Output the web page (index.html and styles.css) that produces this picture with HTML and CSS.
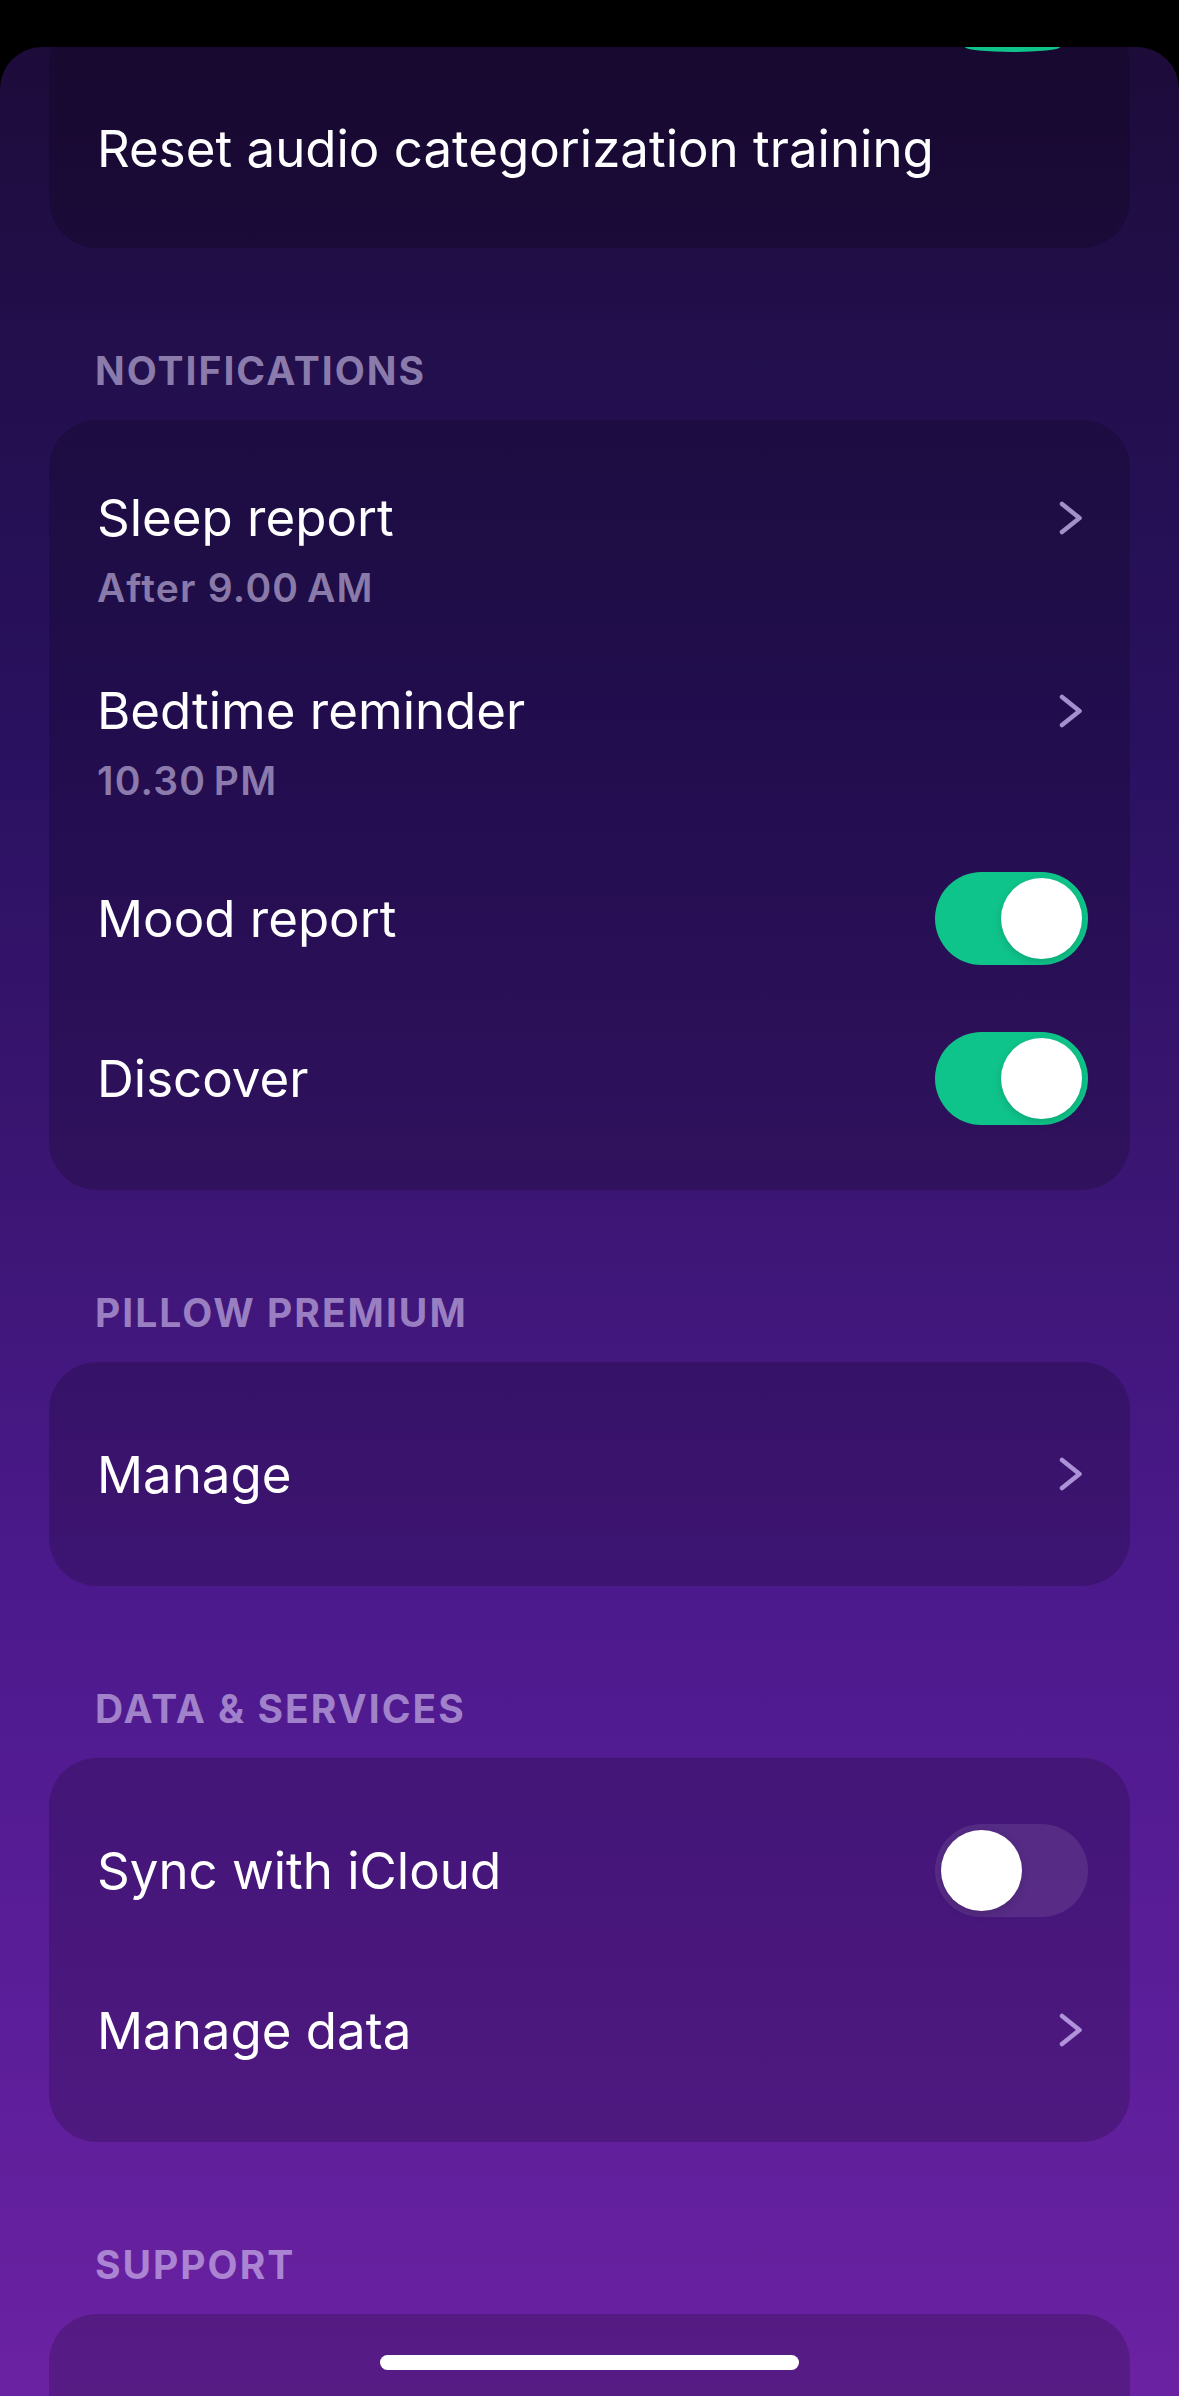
FILE: index.html
```html
<!DOCTYPE html>
<html lang="en">
<head>
    <meta charset="UTF-8">
    <meta name="viewport" content="width=device-width, initial-scale=1.0">
    <title>Settings</title>
    <link rel="stylesheet" href="styles.css">
</head>
<body>

    <div class="sheet">
        <div class="card card-top">
            <div class="peek"></div>
            <div class="row-title">Reset audio categorization training</div>
        </div>

        <h2 class="section-title">Notifications</h2>
        <div class="card">
            <div class="row row-double">
                <div class="row-line">
                    <span class="row-title">Sleep report</span>
                    <svg class="chevron" viewBox="0 0 24 34"><path d="M3 3 L20.5 17 L3 31"/></svg>
                </div>
                <div class="row-sub">After 9.00&#8239;AM</div>
            </div>
            <div class="row row-double">
                <div class="row-line">
                    <span class="row-title">Bedtime reminder</span>
                    <svg class="chevron" viewBox="0 0 24 34"><path d="M3 3 L20.5 17 L3 31"/></svg>
                </div>
                <div class="row-sub">10.30&#8239;PM</div>
            </div>
            <div class="row">
                <span class="row-title">Mood report</span>
                <span class="toggle"><span class="knob"></span></span>
            </div>
            <div class="row">
                <span class="row-title">Discover</span>
                <span class="toggle"><span class="knob"></span></span>
            </div>
        </div>

        <h2 class="section-title">Pillow Premium</h2>
        <div class="card">
            <div class="row">
                <span class="row-title">Manage</span>
                <svg class="chevron" viewBox="0 0 24 34"><path d="M3 3 L20.5 17 L3 31"/></svg>
            </div>
        </div>

        <h2 class="section-title">Data &amp; Services</h2>
        <div class="card">
            <div class="row">
                <span class="row-title">Sync with iCloud</span>
                <span class="toggle off"><span class="knob"></span></span>
            </div>
            <div class="row">
                <span class="row-title">Manage data</span>
                <svg class="chevron" viewBox="0 0 24 34"><path d="M3 3 L20.5 17 L3 31"/></svg>
            </div>
        </div>

        <h2 class="section-title">Support</h2>
        <div class="card card-cut"></div>
    </div>

    <div class="home-indicator"></div>

</body>
</html>
```

FILE: styles.css
```css
* {
    margin: 0;
    padding: 0;
    box-sizing: border-box;
}
body {
    font-family: 'Inter', 'Noto Sans', sans-serif;
    background-color: #000000;
    color: #fff;
    height: 2396px;
    overflow: hidden;
    position: relative;
}
.sheet {
    display: flex;
    flex-direction: column;
    margin-top: 47px;
    min-height: 2349px;
    padding: 0 49px;
    border-radius: 42px 42px 0 0;
    background: linear-gradient(180deg,
        #1d0b3a 0px,
        #220f4c 300px,
        #2a1160 700px,
        #3a1571 1100px,
        #4a198a 1500px,
        #591d98 1900px,
        #6b22a2 2349px);
}
.card {
    background-color: rgba(0, 0, 0, 0.18);
    border-radius: 48px;
    padding: 32px 42px 32px 48px;
}
.card-top {
    margin-top: -30px;
    padding-top: 30px;
    padding-bottom: 69px;
}
.peek {
    width: 95px;
    height: 5px;
    margin: 0 28px 66px auto;
    background-color: #0fc48a;
    border-radius: 0 0 48px 48px / 0 0 5px 5px;
}
.card-cut {
    min-height: 200px;
}
.section-title {
    font-size: 39px;
    font-weight: 700;
    line-height: 45px;
    letter-spacing: 2px;
    text-transform: uppercase;
    color: rgba(232, 220, 255, 0.54);
    margin: 100px 0 27px 46px;
}
.row {
    display: flex;
    align-items: center;
    justify-content: space-between;
    height: 160px;
}
.row-double {
    height: 193px;
    flex-direction: column;
    align-items: stretch;
    justify-content: center;
}
.row-line {
    display: flex;
    align-items: center;
    justify-content: space-between;
}
.row-title {
    font-size: 51px;
    line-height: 61px;
}
.row-sub {
    font-size: 39px;
    font-weight: 600;
    line-height: 45px;
    letter-spacing: 1.2px;
    margin-top: 17px;
    color: rgba(232, 220, 255, 0.54);
}
.chevron {
    width: 24px;
    height: 34px;
    margin-right: 5px;
    fill: none;
    stroke: rgba(215, 195, 255, 0.72);
    stroke-width: 4.5;
    stroke-linecap: round;
    stroke-linejoin: round;
}
.toggle {
    display: flex;
    align-items: center;
    justify-content: flex-end;
    width: 153px;
    height: 93px;
    padding: 6px;
    border-radius: 47px;
    background-color: #0fc48a;
}
.toggle.off {
    justify-content: flex-start;
    background-color: rgba(255, 255, 255, 0.09);
}
.knob {
    width: 81px;
    height: 81px;
    border-radius: 50%;
    background-color: #fff;
    box-shadow: 0 3px 8px rgba(0, 0, 0, 0.15);
}
.home-indicator {
    position: absolute;
    left: 380px;
    bottom: 26px;
    width: 419px;
    height: 15px;
    border-radius: 8px;
    background-color: #fff;
}
```
